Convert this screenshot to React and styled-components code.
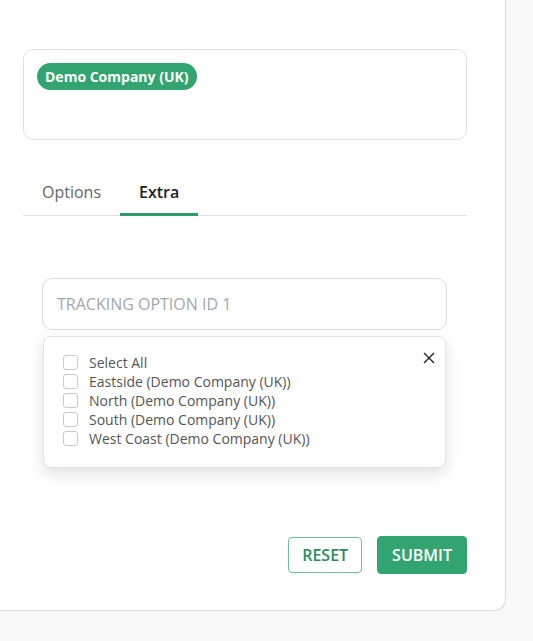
import React from 'react';
import styled, { createGlobalStyle } from 'styled-components';

const GlobalStyle = createGlobalStyle`
  body {
    margin: 0;
    background-color: #f8f8f8;
    font-family: "Open Sans", "Noto Sans", sans-serif;
  }
`;

const green = '#32a46f';

const Card = styled.div`
  width: 506px;
  min-height: 611px;
  background-color: white;
  border-right: 1px solid #dcdcdc;
  border-bottom: 1px solid #dcdcdc;
  border-bottom-right-radius: 12px;
  padding: 49px 38px 36px 23px;
  box-sizing: border-box;
`;

const CompanyBox = styled.div`
  height: 91px;
  border: 1px solid #e0e0e0;
  border-radius: 10px;
  padding: 13px 13px;
  box-sizing: border-box;
`;

const Chip = styled.span`
  display: inline-block;
  background-color: ${green};
  color: white;
  font-size: 14px;
  font-weight: 700;
  line-height: 27px;
  padding: 0 8px;
  border-radius: 14px;
`;

const Tabs = styled.div`
  display: flex;
  margin-top: 32px;
  border-bottom: 1px solid #e0e0e0;
`;

const Tab = styled.div`
  padding: 9px 19px 10px;
  font-size: 16px;
  line-height: 22px;
  color: ${props => props.active ? '#222' : '#666'};
  font-weight: ${props => props.active ? 600 : 400};
  border-bottom: 3px solid ${props => props.active ? '#2e9a68' : 'transparent'};
  margin-bottom: -1px;
`;

const Panel = styled.div`
  padding: 62px 20px 0 19px;
`;

const Field = styled.div`
  position: relative;
`;

const Input = styled.div`
  height: 52px;
  border: 1px solid #dcdcdc;
  border-radius: 10px;
  padding: 0 14px;
  box-sizing: border-box;
  display: flex;
  align-items: center;
  font-size: 16px;
  color: #a3a7ad;
`;

const Dropdown = styled.div`
  position: absolute;
  top: 58px;
  left: 1px;
  right: 1px;
  background-color: white;
  border: 1px solid #e2e2e2;
  border-radius: 8px;
  box-shadow: 0 6px 16px rgba(0, 0, 0, 0.12);
  padding: 16px 19px 19px;
  z-index: 2;
`;

const Close = styled.div`
  position: absolute;
  top: 10px;
  right: 10px;
  width: 12px;
  height: 12px;
`;

const OptionRow = styled.label`
  display: flex;
  align-items: center;
  gap: 11px;
  font-size: 14px;
  line-height: 19px;
  color: #555;
`;

const Box = styled.span`
  width: 15px;
  height: 15px;
  border: 1px solid #c9c9c9;
  border-radius: 3px;
  box-sizing: border-box;
  flex: none;
`;

const Actions = styled.div`
  display: flex;
  justify-content: flex-end;
  align-items: center;
  gap: 15px;
  margin-top: 206px;
`;

const Button = styled.div`
  height: ${props => props.primary ? 38 : 36}px;
  padding: 0 ${props => props.primary ? 14 : 13}px;
  display: flex;
  align-items: center;
  border-radius: 4px;
  font-size: 16px;
  font-weight: 600;
  box-sizing: border-box;
  color: ${props => props.primary ? 'white' : '#2b8a5d'};
  background-color: ${props => props.primary ? green : 'white'};
  border: 1px solid ${props => props.primary ? green : '#6cbf97'};
`;

const options = [
  'Select All',
  'Eastside (Demo Company (UK))',
  'North (Demo Company (UK))',
  'South (Demo Company (UK))',
  'West Coast (Demo Company (UK))',
];

function App() {
  return (
    <>
      <GlobalStyle />
      <Card>
        <CompanyBox>
          <Chip>Demo Company (UK)</Chip>
        </CompanyBox>
        <Tabs>
          <Tab>Options</Tab>
          <Tab active>Extra</Tab>
        </Tabs>
        <Panel>
          <Field>
            <Input>TRACKING OPTION ID 1</Input>
            <Dropdown>
              <Close>
                <svg width="12" height="12" viewBox="0 0 12 12">
                  <path d="M1 1L11 11M11 1L1 11" stroke="#222" strokeWidth="1.4" />
                </svg>
              </Close>
              {options.map(o => (
                <OptionRow key={o}>
                  <Box />
                  {o}
                </OptionRow>
              ))}
            </Dropdown>
          </Field>
        </Panel>
        <Actions>
          <Button>RESET</Button>
          <Button primary>SUBMIT</Button>
        </Actions>
      </Card>
    </>
  );
}

export default App;
